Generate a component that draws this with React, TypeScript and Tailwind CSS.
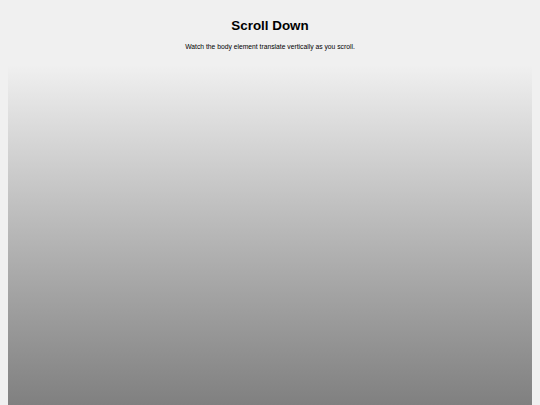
export default function App() {
  return (
    <div className="min-h-screen bg-[#f0f0f0] font-['Liberation_Sans',Arial,sans-serif] text-black">
      <header className="pt-[17px] pb-[14px] text-center">
        <h1 className="text-[13.4px] font-bold leading-[18px]">Scroll Down</h1>
        <p className="mt-[7px] text-[6.75px] leading-[9px]">
          Watch the body element translate vertically as you scroll.
        </p>
      </header>
      <div className="mx-[8px] h-[340px] bg-gradient-to-b from-[#f0f0f0] to-[#808080]" />
    </div>
  );
}
